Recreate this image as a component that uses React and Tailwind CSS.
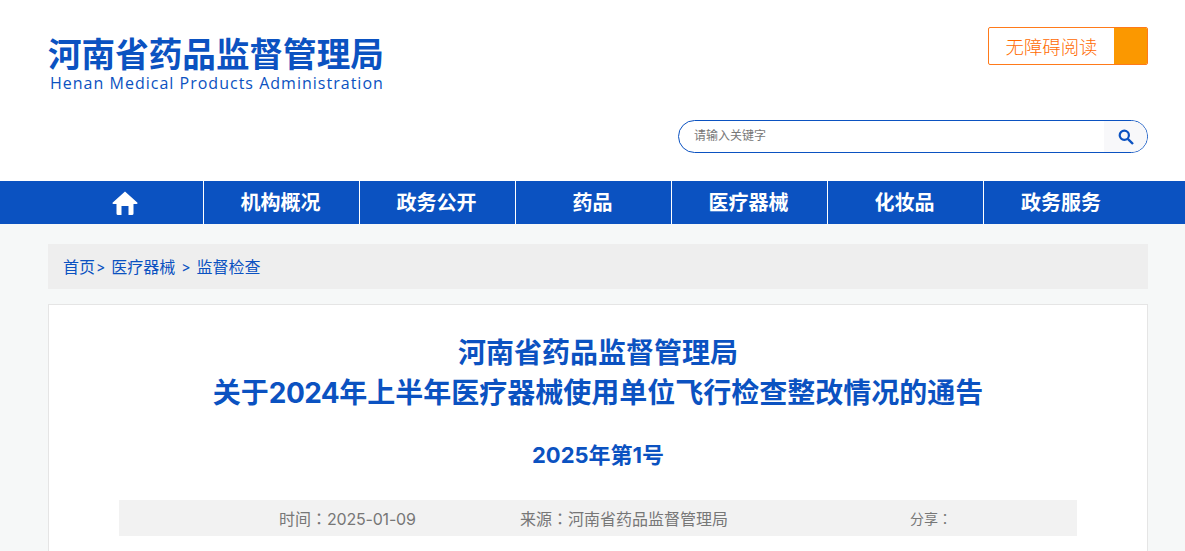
const NAV = ['机构概况', '政务公开', '药品', '医疗器械', '化妆品', '政务服务'];

function HomeIcon() {
  return (
    <svg width="26" height="24" viewBox="0 0 26 24" fill="#fff">
      <path
        fillRule="evenodd"
        d="M13 0.5 L25.5 11.8 Q25.8 13 24.5 13 H21.5 V22.5 Q21.5 24 20 24 H16.5 V15 H9.5 V24 H6 Q4.5 24 4.5 22.5 V13 H1.5 Q0.2 13 0.5 11.8 Z"
      />
    </svg>
  );
}

function SearchIcon() {
  return (
    <svg width="16" height="16" viewBox="0 0 16 16" fill="none" stroke="#0b52c1">
      <circle cx="6.3" cy="6.3" r="4.6" strokeWidth="2.2" />
      <path d="M9.8 9.8 L15 15" strokeWidth="2.4" />
    </svg>
  );
}

// the reference sets its fullwidth colon centred, which is the TC form of the glyph
function Colon() {
  return <span className="font-['Noto_Sans_CJK_TC',sans-serif]">：</span>;
}

export default function App() {
  return (
    <div className="h-[551px] overflow-hidden bg-[#f6f8f8] font-['Inter','Noto_Sans_CJK_SC',sans-serif]">
      <header className="h-[181px] bg-white">
        <div className="ml-[48px] flex w-[1100px] justify-between">
          <div className="pt-[36px]">
            <div className="text-[33.6px] font-bold leading-[38px] text-[#0b52c1]">河南省药品监督管理局</div>
            <div className="ml-[2px] mt-[1px] font-['Open_Sans',sans-serif] text-[16px] leading-[16px] tracking-[1.01px] text-[#0b52c1]">
              Henan Medical Products Administration
            </div>
          </div>
          <div className="flex flex-col items-end pt-[27px]">
            <div className="flex h-[38px] w-[160px] overflow-hidden rounded-[2px] border border-[#ff7a1a]">
              <div className="flex w-[125px] items-center justify-center pt-[3px] text-[18.4px] font-light text-[#ff6a00]">无障碍阅读</div>
              <div className="flex-1 bg-[#fb9800]" />
            </div>
            <div className="mt-[55px] flex h-[33px] w-[470px] items-center overflow-hidden rounded-full border border-[#0b52c1]">
              <div className="flex-1 pb-[1px] pl-[15px] text-[12px] text-[#777]">请输入关键字</div>
              <div className="flex h-full w-[43px] items-center justify-center bg-[#f8f8fa]">
                <SearchIcon />
              </div>
            </div>
          </div>
        </div>
      </header>

      <nav className="h-[43px] bg-[#0b52c1]">
        <ul className="ml-[48px] flex w-[1100px]">
          <li className="flex h-[43px] w-[156px] items-center justify-center border-r border-white pr-[2px]">
            <HomeIcon />
          </li>
          {NAV.map((item, i) => (
            <li
              key={item}
              className={`flex h-[43px] w-[156px] items-center justify-center pr-[2px] text-[20px] font-bold text-white ${i < NAV.length - 1 ? 'border-r border-white' : ''}`}
            >
              {item}
            </li>
          ))}
        </ul>
      </nav>

      <main className="ml-[48px] w-[1100px] pt-[20px]">
        <div className="flex h-[45px] items-center bg-[#eeeeee] pl-[15px] text-[16px] text-[#0b52c1]">
          <span>首页</span>
          <span className="ml-[1px] text-[14px]">&gt;</span>
          <span className="ml-[6px]">医疗器械</span>
          <span className="ml-[6px] text-[14px]">&gt;</span>
          <span className="ml-[6px]">监督检查</span>
        </div>

        <article className="mt-[15px] h-[300px] border border-[#e5e5e5] bg-white px-[70px] pt-[28px]">
          <h1 className="text-center text-[28px] font-bold leading-[40px] text-[#0b52c1]">
            河南省药品监督管理局
            <br />
            关于<span className="tracking-[-0.6px]">2024</span>年上半年医疗器械使用单位飞行检查整改情况的通告
          </h1>
          <h2 className="mt-[22px] text-center text-[22px] font-bold leading-[40px] text-[#0b52c1]">2025年第1号</h2>
          <div className="mt-[25px] flex h-[36px] items-center bg-[#f2f2f2] text-[#777]">
            <span className="ml-[160px] w-[241px] text-[16px]">时间<Colon /><span className="tracking-[-0.2px]">2025-01-09</span></span>
            <span className="w-[390px] text-[16px]">来源<Colon />河南省药品监督管理局</span>
            <span className="text-[14px]">分享<Colon /></span>
          </div>
        </article>
      </main>
    </div>
  );
}
